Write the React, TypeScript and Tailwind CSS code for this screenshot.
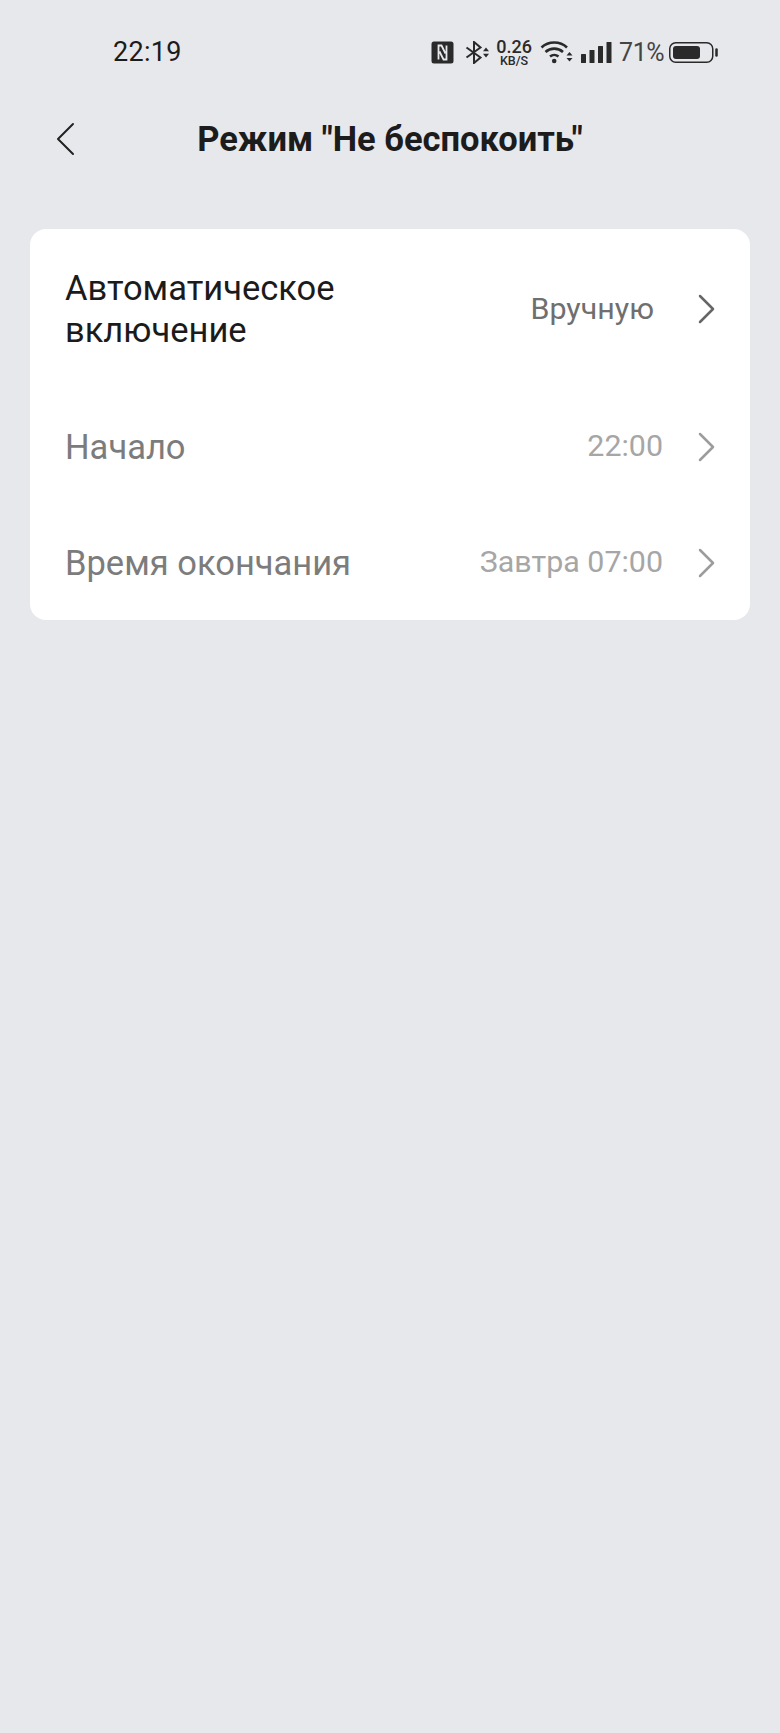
const sans = "font-['Roboto','Noto_Sans',sans-serif]";

function NfcIcon() {
  return (
    <svg width="23" height="23" viewBox="0 0 23 23" className="text-[#2a2a2a]">
      <rect x="0.500" y="0.500" width="22" height="22" rx="2.500" fill="currentColor" />
      <path d="M7.500 18.500V4.500h3l4 8M15.500 4.500v14h-3l-4-8" fill="none" stroke="#e7e8ec" strokeWidth="1.800" />
    </svg>
  );
}

function BluetoothIcon() {
  return (
    <svg width="25" height="23" viewBox="0 0 25 23" fill="none" className="text-[#2a2a2a]">
      <path d="M1.500 6.500l14 10L9 22V1l6.500 5.500-14 10" stroke="currentColor" strokeWidth="2" />
      <path d="M18 10.200l3-3.700 3 3.700zM18 12.800h6l-3 3.700z" fill="currentColor" />
    </svg>
  );
}

function WifiIcon() {
  return (
    <svg width="33" height="24" viewBox="0 0 33 24" fill="none" className="text-[#2a2a2a]">
      <path d="M1.500 7.500C8.500 .8 20 .8 27 7.500" stroke="currentColor" strokeWidth="2.600" />
      <path d="M5.500 12c5-4.500 12.500-4.500 17.500 0" stroke="currentColor" strokeWidth="2.600" />
      <path d="M10 16.500c2.500-2.200 6-2.200 8.500 0" stroke="currentColor" strokeWidth="2.400" />
      <circle cx="14.200" cy="21" r="2.300" fill="currentColor" />
      <path d="M26.500 15.500l3-3.500 3 3.500zM26.500 18h6l-3 3.500z" fill="currentColor" />
    </svg>
  );
}

function SignalIcon() {
  return (
    <svg width="31" height="22" viewBox="0 0 31 22" fill="currentColor" className="text-[#2a2a2a]">
      <rect x="0" y="13" width="5" height="9" rx="0.500" />
      <rect x="8.500" y="9" width="5" height="13" rx="0.500" />
      <rect x="17" y="5" width="5" height="17" rx="0.500" />
      <rect x="25.500" y="1" width="5" height="21" rx="0.500" />
    </svg>
  );
}

function BatteryIcon() {
  return (
    <svg width="49" height="23" viewBox="0 0 49 23" fill="none" className="text-[#2a2a2a]">
      <rect x="0.750" y="1.750" width="43" height="19.500" rx="6" stroke="currentColor" strokeWidth="1.500" />
      <rect x="4" y="5" width="27" height="13" rx="3" fill="currentColor" />
      <path d="M47.500 8.500v6" stroke="currentColor" strokeWidth="2.500" strokeLinecap="round" />
    </svg>
  );
}

function Chevron({ className }: { className: string }) {
  return (
    <svg width="18" height="30" viewBox="0 0 18 30" fill="none" className={className}>
      <path d="M3 2l13 13L3 28" stroke="currentColor" strokeWidth="2.500" strokeLinecap="round" strokeLinejoin="round" />
    </svg>
  );
}

function StatusBar() {
  return (
    <div className="flex items-center justify-between h-[52px] pl-[113px] pr-[62px]">
      <span className="text-[27px] leading-none text-[#1c1c1c] tracking-[0.3px]">22:19</span>
      <div className="flex items-center">
        <NfcIcon />
        <div className="ml-[11px]"><BluetoothIcon /></div>
        <div className="ml-[6px] flex flex-col items-center w-[36px] text-[#2a2a2a] font-medium">
          <span className="text-[18px] leading-[16px]">0.26</span>
          <span className="text-[12.500px] leading-[11px]">KB/S</span>
        </div>
        <div className="ml-[8px]"><WifiIcon /></div>
        <div className="ml-[8px]"><SignalIcon /></div>
        <span className="ml-[7px] text-[25px] leading-none text-[#444] tracking-[-0.5px]">71%</span>
        <div className="ml-[5px]"><BatteryIcon /></div>
      </div>
    </div>
  );
}

type RowProps = {
  label: string;
  value: string;
  disabled?: boolean;
  heightClass: string;
  valueClass: string;
};

function Row({ label, value, disabled, heightClass, valueClass }: RowProps) {
  return (
    <div className={`flex items-center justify-between pl-[35px] pr-[35px] ${heightClass}`}>
      <span className={`w-[330px] text-[34.500px] leading-[42px] ${disabled ? "text-[#7c7c7c]" : "text-[#1b1b1b]"}`}>
        {label}
      </span>
      <div className="flex items-center">
        <span className={`text-[30.400px] leading-none ${valueClass}`}>{value}</span>
        <Chevron className={disabled ? "text-[#9c9c9c]" : "text-[#666]"} />
      </div>
    </div>
  );
}

export default function App() {
  return (
    <div className={`min-h-[1733px] bg-[#e7e8ec] ${sans}`}>
      <div className="pt-[26px]">
        <StatusBar />
      </div>

      {/* Title bar */}
      <div className="relative mt-[36px] flex items-center justify-center h-[50px]">
        <svg width="22" height="34" viewBox="0 0 22 34" fill="none" className="absolute left-[55px] top-[8px] text-[#222]">
          <path d="M18 2L3 17l15 15" stroke="currentColor" strokeWidth="2" strokeLinecap="round" strokeLinejoin="round" />
        </svg>
        <h1 className="text-[34.500px] leading-none font-bold text-[#1c1c1c]">Режим "Не беспокоить"</h1>
      </div>

      {/* Settings card */}
      <div className="mx-[30px] mt-[65px] rounded-[16px] bg-white pt-[1px]">
        <Row label="Автоматическое включение" value="Вручную" heightClass="h-[158px]" valueClass="text-[#6f6f6f] mr-[43px]" />
        <Row label="Начало" value="22:00" disabled heightClass="h-[117px]" valueClass="text-[#a6a6a6] mr-[34px]" />
        <Row label="Время окончания" value="Завтра 07:00" disabled heightClass="h-[115px]" valueClass="text-[#a6a6a6] mr-[34px]" />
      </div>
    </div>
  );
}
